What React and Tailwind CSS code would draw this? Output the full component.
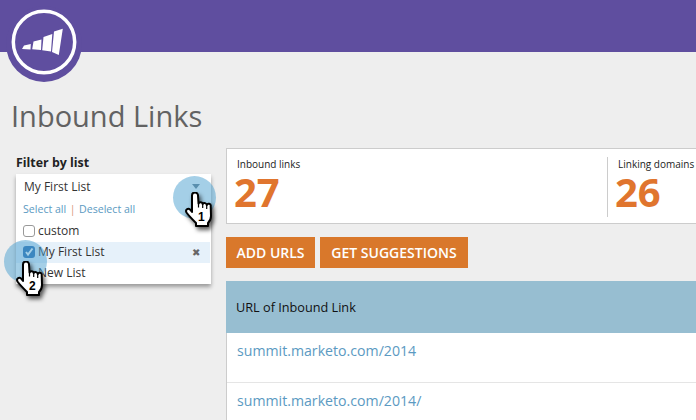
const font = { fontFamily: '"Open Sans", "Noto Sans", sans-serif' }

// Mano del tutorial con su número
function Hand({ n, className }) {
  return (
    <div className={`absolute w-[30px] h-[37px] ${className}`}>
      <svg width="30" height="37" viewBox="0 0 30 37" className="drop-shadow-[2px_3px_2px_rgba(0,0,0,0.65)]">
        <path
          d="M8 3.500a3 3 0 0 1 6 0L14.500 11.500a2.200 2.200 0 0 1 4.200.500a2.200 2.200 0 0 1 4 1a2.100 2.100 0 0 1 4 1.200L27 24c0 3-1 5-3 7v3H12v-3C8 27 5 24 2.500 20.500C1 18 4 15.500 6 17.500L8 20Z"
          fill="#fff"
          stroke="#000"
          strokeWidth="2"
          strokeLinejoin="round"
        />
        <path d="M14.500 11.500v4M18.700 12v4M22.700 13v4" stroke="#000" strokeWidth="1.200" fill="none" />
      </svg>
      <span className="absolute left-[14px] top-[18px] text-xs leading-[14px] font-bold text-black" style={{ fontFamily: '"Liberation Sans", sans-serif' }}>
        {n}
      </span>
    </div>
  )
}

function FilterPanel() {
  return (
    <div className="w-[195px] shrink-0 relative">
      <div className="text-[12.4px] leading-[16px] font-bold text-[#222] mt-[7px] h-[19px]">Filter by list</div>
      <div className="bg-white shadow-[0_3px_4px_rgba(0,0,0,0.35)] h-[110px] text-xs text-[#333]">
        <div className="h-[25px] flex items-center pl-2 pr-[11px] justify-between">
          <span>My First List</span>
          <span className="w-0 h-0 border-x-[4px] border-x-transparent border-t-[5px] border-t-[#6b7f8c]" />
        </div>
        <div className="h-[21px] pl-[7px] flex items-center text-[10.6px] text-[#5b9ac2]">
          <span>Select all</span>
          <span className="mx-[3.500px] text-[#d79a78]">|</span>
          <span>Deselect all</span>
        </div>
        <div className="h-[22px] pl-[7px] flex items-center gap-[3px]">
          <span className="w-3 h-3 rounded-[3px] border border-[#999] bg-white" />
          <span>custom</span>
        </div>
        <div className="h-[21px] pl-[7px] pr-[10px] pb-[2px] mr-[1px] flex items-center gap-[3px] bg-[#e6f1fa]">
          <span className="w-3 h-3 rounded-[3px] bg-[#2f6fb0] flex items-center justify-center">
            <svg width="10" height="10" viewBox="0 0 10 10">
              <path d="M2 5l2 2.500 4.500-6" stroke="#fff" strokeWidth="2" fill="none" />
            </svg>
          </span>
          <span className="flex-1">My First List</span>
          <span className="text-[10px] leading-none text-[#666]">✖</span>
        </div>
        <div className="h-[21px] pl-[22px] pb-[2px] flex items-center">New List</div>
      </div>
      <div className="absolute left-[157px] top-[28px] w-[43px] h-[43px] rounded-full bg-[#4a9fd0]/50" />
      <div className="absolute left-[-12px] top-[92px] w-[43px] h-[43px] rounded-full bg-[#4a9fd0]/50" />
      <Hand n="1" className="left-[168px] top-[44px]" />
      <Hand n="2" className="left-[-1px] top-[113px]" />
    </div>
  )
}

export default function App() {
  return (
    <div className="relative w-[696px] h-[420px] overflow-hidden bg-[#eeeeee]" style={font}>
      <div className="h-[52px] bg-[#5f4e9f]" />
      {/* Logo */}
      <div className="absolute left-[6px] top-[6px] w-[76px] h-[76px] rounded-full bg-[#5f4e9f]">
        <svg width="66" height="66" viewBox="0 0 66 66" className="absolute left-[4.500px] top-[2.500px]">
          <circle cx="33" cy="33" r="30.700" fill="none" stroke="#fff" strokeWidth="3.500" />
          <path d="M11 40l2-3.500 6.800-1.500-.3 5.500zM21.200 40.200l1.300-7.700 8-2-.5 10.500zM31.200 41.200l1.300-13.200 8.800-3-1.300 17.500zM41 43l2-20.500 8.800-2.700-4 26.200z" fill="#fff" />
        </svg>
      </div>

      <h1 className="text-[29px] leading-[40px] text-[#626262] pl-[11px] mt-[44px] h-[52px]">Inbound Links</h1>

      <div className="flex pl-4 gap-[15px]">
        <FilterPanel />

        <div className="flex-1 min-w-0">
          <div className="h-[76px] bg-white border border-[#cccccc] flex pt-2 mr-[-10px]">
            <div className="w-[380px] pl-[10px]">
              <div className="text-[10px] leading-[14px] text-[#222]">Inbound links</div>
              <div className="text-[40px] leading-[42px] font-bold text-[#e0752e] ml-[-3px]">27</div>
            </div>
            <div className="h-[60px] border-l border-[#cccccc] pl-[10px]">
              <div className="text-[10px] leading-[14px] text-[#222]">Linking domains</div>
              <div className="text-[40px] leading-[42px] font-bold text-[#e0752e] ml-[-3px]">26</div>
            </div>
          </div>

          <div className="flex gap-[5px] mt-[13px]">
            <button className="h-[31px] w-[89px] bg-[#d9782b] text-white text-sm font-semibold">ADD URLS</button>
            <button className="h-[31px] w-[148px] bg-[#d9782b] text-white text-sm font-semibold">GET SUGGESTIONS</button>
          </div>

          <div className="mt-[13px] h-[52px] bg-[#97bed1] flex items-center pl-[10px] pt-[1px] text-[12.7px] text-[#111]">URL of Inbound Link</div>
          <div className="bg-white border-l border-[#cccccc]">
            <div className="h-[50px] border-b border-[#e5e5e5] pl-[10px] pt-[8px] text-[14.150px] leading-[20px] text-[#5b9ac2]">summit.marketo.com/2014</div>
            <div className="h-[50px] pl-[10px] pt-[8px] text-[14.150px] leading-[20px] text-[#5b9ac2]">summit.marketo.com/2014/</div>
          </div>
        </div>
      </div>
    </div>
  )
}
